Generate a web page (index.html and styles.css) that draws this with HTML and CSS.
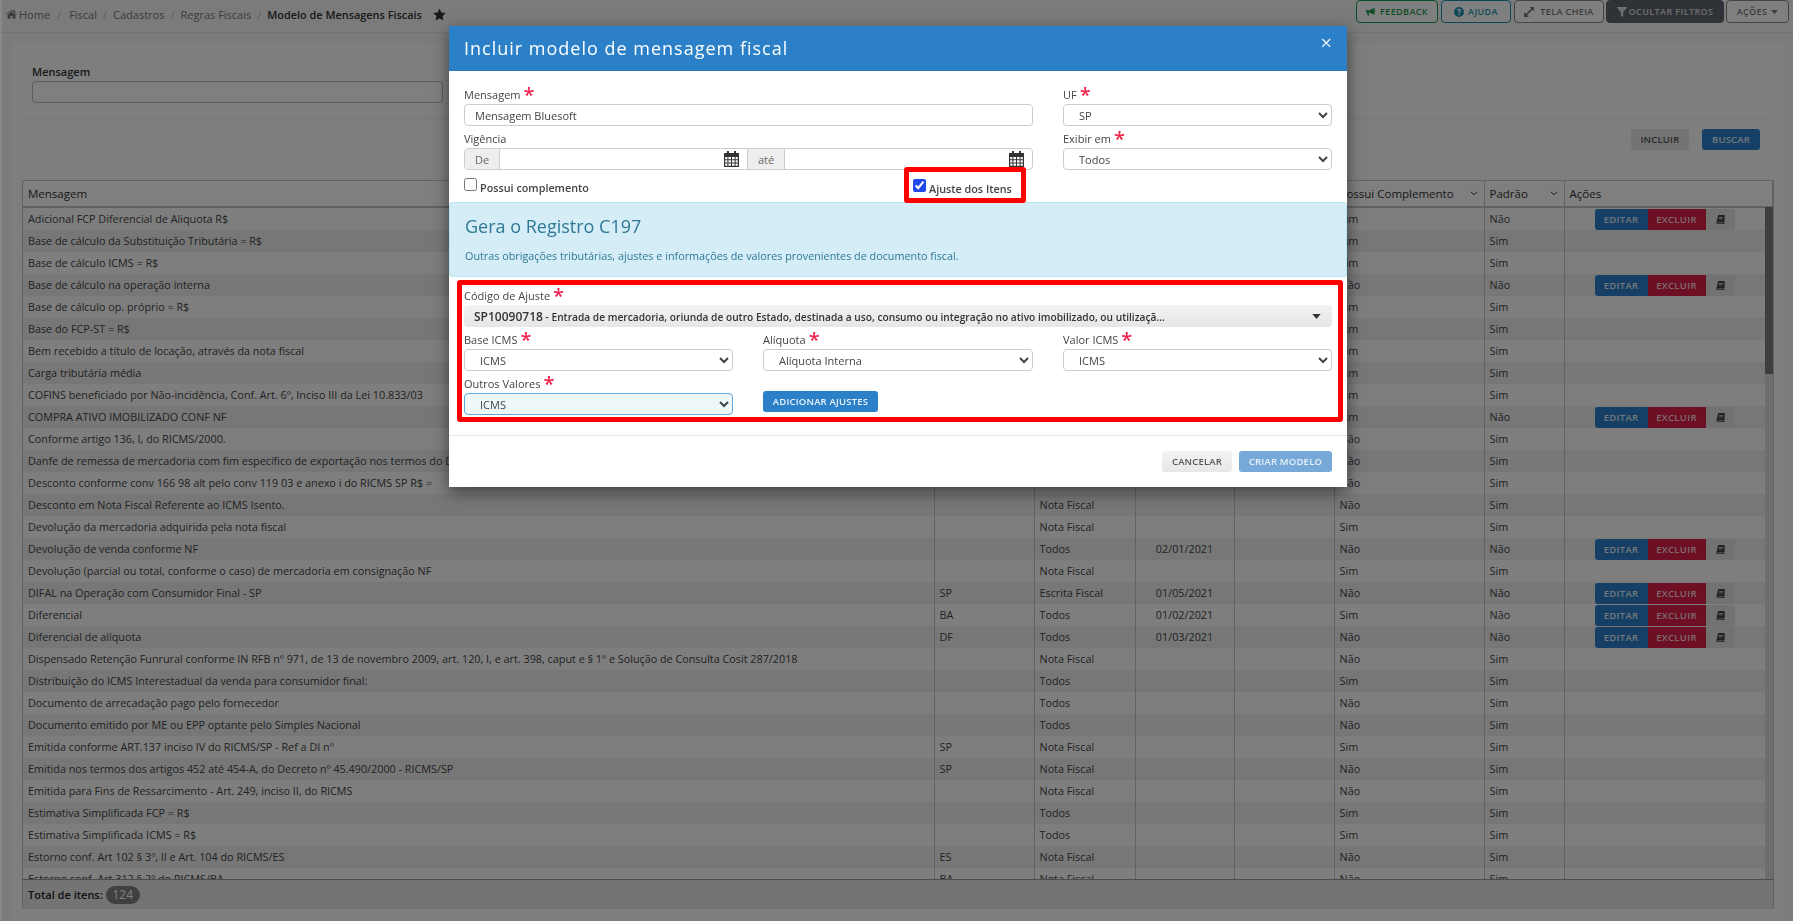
FILE: index.html
```html
<!DOCTYPE html>
<html lang="pt-BR">
<head>
  <meta charset="UTF-8">
  <meta name="viewport" content="width=device-width, initial-scale=1.0">
  <title>Modelo de Mensagens Fiscais</title>
  <link rel="stylesheet" href="styles.css">
</head>
<body>
  <svg class="icon_defs" width="0" height="0">
    <symbol id="i_home" viewBox="0 0 14 12"><path d="M7 0.6 0.2 6.3l.7.8L7 2l6.100 5.100.7-.8-2.300-1.900V1.300H9.800v1.500zM2 7.300V12h3.700V8.600h2.600V12H12V7.300L7 3.200z"/></symbol>
    <symbol id="i_star" viewBox="0 0 24 24"><path d="M12 .8l3.500 7.500 8.100 1-6 5.600 1.600 8.100-7.200-4-7.200 4 1.600-8.100-6-5.600 8.100-1z"/></symbol>
    <symbol id="i_horn" viewBox="0 0 14 12"><path d="M0 3.500h4.500L12 .2v9.600L4.500 6.800v0H3.700l.9 4.200H2.300L1.500 6.800H0zM12.800 3.400c.8.400.8 2.800 0 3.200z"/></symbol>
    <symbol id="i_help" viewBox="0 0 12 12"><path fill-rule="evenodd" d="M6 0a6 6 0 1 0 0 12A6 6 0 0 0 6 0zM5 8.400h1.800V10H5zM3.400 4.300C3.500 2.900 4.600 2.100 6 2.100c1.500 0 2.700.9 2.700 2.200 0 1.700-1.900 1.800-1.900 3.200H5.100c0-2 1.800-2.200 1.800-3.100 0-.4-.4-.7-.9-.7-.6 0-.9.300-1 .9z"/></symbol>
    <symbol id="i_expand" viewBox="0 0 12 12"><path d="M7 0h5v5l-1.800-1.800-6.400 6.400L5.500 11.300V12H0V6.500h.7l1.700 1.700 6.400-6.400z"/></symbol>
    <symbol id="i_filter" viewBox="0 0 12 12"><path d="M0 0h12v1L7.500 6v6L4.500 10V6L0 1z"/></symbol>
    <symbol id="i_caret" viewBox="0 0 10 6"><path d="M0 0h10L5 6z"/></symbol>
    <symbol id="i_chev" viewBox="0 0 10 6"><path d="M1 1l4 3.500L9 1" fill="none" stroke="currentColor" stroke-width="1.200"/></symbol>
    <symbol id="i_book" viewBox="0 0 12 12"><path d="M3 0h8.500v8.500L10.600 9.500v1L11.500 11v1H2.500C1 12 .5 11 .5 10zM2.500 10c-.7 0-.7 1 0 1h7.200v-1zM4 2.500v1h5v-1zM3.600 4.500v1h5v-1z"/></symbol>
    <symbol id="i_cal" viewBox="0 0 15 16"><path d="M3 0h2v2h5V0h2v2h3v14H0V2h3zM1.200 6v2.200h2.200V6zm3.200 0v2.200h2.600V6zm3.600 0v2.200h2.600V6zm3.600 0v2.200h2.200V6zM1.200 9.200v2.200h2.200V9.200zm3.200 0v2.200h2.600V9.200zm3.600 0v2.200h2.600V9.200zm3.600 0v2.200h2.200V9.200zM1.200 12.400v2.400h2.200v-2.400zm3.200 0v2.400h2.600v-2.400zm3.600 0v2.400h2.600v-2.400zm3.600 0v2.400h2.200v-2.400z"/></symbol>
  </svg>

  <header class="topbar">
    <nav class="crumbs">
      <svg class="ic_home"><use href="#i_home"/></svg>
      <a class="crumb crumb_home">Home</a><i>/</i>
      <a class="crumb">Fiscal</a><i>/</i>
      <a class="crumb">Cadastros</a><i>/</i>
      <a class="crumb">Regras Fiscais</a><i>/</i>
      <strong class="crumb_now">Modelo de Mensagens Fiscais</strong>
      <svg class="ic_star"><use href="#i_star"/></svg>
    </nav>
    <div class="top_actions">
      <a class="tbtn tbtn_feedback"><svg><use href="#i_horn"/></svg>Feedback</a>
      <a class="tbtn tbtn_help"><svg><use href="#i_help"/></svg>Ajuda</a>
      <a class="tbtn tbtn_full"><svg><use href="#i_expand"/></svg>Tela cheia</a>
      <a class="tbtn tbtn_filter"><svg><use href="#i_filter"/></svg>Ocultar filtros</a>
      <a class="tbtn tbtn_more">Ações<svg class="ic_caret"><use href="#i_caret"/></svg></a>
    </div>
  </header>

  <main class="card">
    <div class="filters">
      <label class="flabel">Mensagem</label>
      <input class="finput" type="text">
    </div>
    <hr class="rule">
    <div class="filter_btns">
      <a class="btn btn_grey">Incluir</a>
      <a class="btn btn_blue">Buscar</a>
    </div>

    <div class="grid_wrap">
      <table class="grid">
        <colgroup>
          <col class="c_msg"><col class="c_uf"><col class="c_exib"><col class="c_ini"><col class="c_fim"><col class="c_comp"><col class="c_pad"><col>
        </colgroup>
        <thead>
          <tr>
            <th>Mensagem</th>
            <th>UF</th>
            <th>Exibir em</th>
            <th>Início</th>
            <th>Fim</th>
            <th>Possui Complemento<svg class="ic_chev"><use href="#i_chev"/></svg></th>
            <th>Padrão<svg class="ic_chev"><use href="#i_chev"/></svg></th>
            <th>Ações</th>
          </tr>
        </thead>
        <tbody>
          <tr><td>Adicional FCP Diferencial de Aliquota R$</td><td></td><td></td><td></td><td></td><td>Sim</td><td>Não</td><td><div class="row_btns"><a class="rb rb_edit">Editar</a><a class="rb rb_del">Excluir</a><a class="rb rb_book"><svg><use href="#i_book"/></svg></a></div></td></tr>
          <tr><td>Base de cálculo da Substituição Tributária = R$</td><td></td><td></td><td></td><td></td><td>Sim</td><td>Sim</td><td></td></tr>
          <tr><td>Base de cálculo ICMS = R$</td><td></td><td></td><td></td><td></td><td>Sim</td><td>Sim</td><td></td></tr>
          <tr><td>Base de cálculo na operação interna</td><td></td><td></td><td></td><td></td><td>Não</td><td>Não</td><td><div class="row_btns"><a class="rb rb_edit">Editar</a><a class="rb rb_del">Excluir</a><a class="rb rb_book"><svg><use href="#i_book"/></svg></a></div></td></tr>
          <tr><td>Base de cálculo op. próprio = R$</td><td></td><td></td><td></td><td></td><td>Sim</td><td>Sim</td><td></td></tr>
          <tr><td>Base do FCP-ST = R$</td><td></td><td></td><td></td><td></td><td>Sim</td><td>Sim</td><td></td></tr>
          <tr><td>Bem recebido a título de locação, através da nota fiscal</td><td></td><td></td><td></td><td></td><td>Sim</td><td>Sim</td><td></td></tr>
          <tr><td>Carga tributária média</td><td></td><td></td><td></td><td></td><td>Sim</td><td>Sim</td><td></td></tr>
          <tr><td>COFINS beneficiado por Não-incidência, Conf. Art. 6º, Inciso III da Lei 10.833/03</td><td></td><td></td><td></td><td></td><td>Sim</td><td>Sim</td><td></td></tr>
          <tr><td>COMPRA ATIVO IMOBILIZADO CONF NF</td><td></td><td></td><td></td><td></td><td>Sim</td><td>Não</td><td><div class="row_btns"><a class="rb rb_edit">Editar</a><a class="rb rb_del">Excluir</a><a class="rb rb_book"><svg><use href="#i_book"/></svg></a></div></td></tr>
          <tr><td>Conforme artigo 136, I, do RICMS/2000.</td><td></td><td></td><td></td><td></td><td>Não</td><td>Sim</td><td></td></tr>
          <tr><td>Danfe de remessa de mercadoria com fim específico de exportação nos termos do Decreto</td><td></td><td></td><td></td><td></td><td>Não</td><td>Sim</td><td></td></tr>
          <tr><td>Desconto conforme conv 166 98 alt pelo conv 119 03 e anexo i do RICMS SP R$ =</td><td></td><td></td><td></td><td></td><td>Não</td><td>Sim</td><td></td></tr>
          <tr><td>Desconto em Nota Fiscal Referente ao ICMS Isento.</td><td></td><td>Nota Fiscal</td><td></td><td></td><td>Não</td><td>Sim</td><td></td></tr>
          <tr><td>Devolução da mercadoria adquirida pela nota fiscal</td><td></td><td>Nota Fiscal</td><td></td><td></td><td>Sim</td><td>Sim</td><td></td></tr>
          <tr><td>Devolução de venda conforme NF</td><td></td><td>Todos</td><td class="cdate">02/01/2021</td><td></td><td>Não</td><td>Não</td><td><div class="row_btns"><a class="rb rb_edit">Editar</a><a class="rb rb_del">Excluir</a><a class="rb rb_book"><svg><use href="#i_book"/></svg></a></div></td></tr>
          <tr><td>Devolução (parcial ou total, conforme o caso) de mercadoria em consignação NF</td><td></td><td>Nota Fiscal</td><td></td><td></td><td>Sim</td><td>Sim</td><td></td></tr>
          <tr><td>DIFAL na Operação com Consumidor Final - SP</td><td>SP</td><td>Escrita Fiscal</td><td class="cdate">01/05/2021</td><td></td><td>Não</td><td>Não</td><td><div class="row_btns"><a class="rb rb_edit">Editar</a><a class="rb rb_del">Excluir</a><a class="rb rb_book"><svg><use href="#i_book"/></svg></a></div></td></tr>
          <tr><td>Diferencial</td><td>BA</td><td>Todos</td><td class="cdate">01/02/2021</td><td></td><td>Sim</td><td>Não</td><td><div class="row_btns"><a class="rb rb_edit">Editar</a><a class="rb rb_del">Excluir</a><a class="rb rb_book"><svg><use href="#i_book"/></svg></a></div></td></tr>
          <tr><td>Diferencial de alíquota</td><td>DF</td><td>Todos</td><td class="cdate">01/03/2021</td><td></td><td>Não</td><td>Não</td><td><div class="row_btns"><a class="rb rb_edit">Editar</a><a class="rb rb_del">Excluir</a><a class="rb rb_book"><svg><use href="#i_book"/></svg></a></div></td></tr>
          <tr><td>Dispensado Retenção Funrural conforme IN RFB nº 971, de 13 de novembro 2009, art. 120, I, e art. 398, caput e § 1º e Solução de Consulta Cosit 287/2018</td><td></td><td>Nota Fiscal</td><td></td><td></td><td>Não</td><td>Sim</td><td></td></tr>
          <tr><td>Distribuição do ICMS Interestadual da venda para consumidor final:</td><td></td><td>Todos</td><td></td><td></td><td>Sim</td><td>Sim</td><td></td></tr>
          <tr><td>Documento de arrecadação pago pelo fornecedor</td><td></td><td>Todos</td><td></td><td></td><td>Não</td><td>Sim</td><td></td></tr>
          <tr><td>Documento emitido por ME ou EPP optante pelo Simples Nacional</td><td></td><td>Todos</td><td></td><td></td><td>Não</td><td>Sim</td><td></td></tr>
          <tr><td>Emitida conforme ART.137 inciso IV do RICMS/SP - Ref a DI nº</td><td>SP</td><td>Nota Fiscal</td><td></td><td></td><td>Sim</td><td>Sim</td><td></td></tr>
          <tr><td>Emitida nos termos dos artigos 452 até 454-A, do Decreto nº 45.490/2000 - RICMS/SP</td><td>SP</td><td>Nota Fiscal</td><td></td><td></td><td>Não</td><td>Sim</td><td></td></tr>
          <tr><td>Emitida para Fins de Ressarcimento - Art. 249, inciso II, do RICMS</td><td></td><td>Nota Fiscal</td><td></td><td></td><td>Não</td><td>Sim</td><td></td></tr>
          <tr><td>Estimativa Simplificada FCP = R$</td><td></td><td>Todos</td><td></td><td></td><td>Sim</td><td>Sim</td><td></td></tr>
          <tr><td>Estimativa Simplificada ICMS = R$</td><td></td><td>Todos</td><td></td><td></td><td>Sim</td><td>Sim</td><td></td></tr>
          <tr><td>Estorno conf. Art 102 § 3º, II e Art. 104 do RICMS/ES</td><td>ES</td><td>Nota Fiscal</td><td></td><td></td><td>Não</td><td>Sim</td><td></td></tr>
          <tr><td>Estorno conf. Art 312 § 2º do RICMS/BA</td><td>BA</td><td>Nota Fiscal</td><td></td><td></td><td>Não</td><td>Sim</td><td></td></tr>
        </tbody>
      </table>
      <div class="sbar"><div class="sthumb"></div></div>
    </div>
    <div class="grid_foot">
      <strong>Total de itens:</strong>
      <span class="count">124</span>
    </div>
  </main>

  <div class="backdrop"></div>

  <section class="modal">
    <div class="modal_head">
      <h2>Incluir modelo de mensagem fiscal</h2>
      <span class="modal_close">&times;</span>
    </div>

    <div class="modal_form">
      <div class="field span2">
        <label>Mensagem <b class="req">*</b></label>
        <input class="ctl" type="text" value="Mensagem Bluesoft">
      </div>
      <div class="field">
        <label>UF <b class="req">*</b></label>
        <select class="ctl"><option>SP</option></select>
      </div>
      <div class="field span2">
        <label>Vigência</label>
        <div class="range">
          <span class="addon addon_de">De</span>
          <div class="date_box"><svg><use href="#i_cal"/></svg></div>
          <span class="addon addon_ate">até</span>
          <div class="date_box"><svg><use href="#i_cal"/></svg></div>
        </div>
      </div>
      <div class="field">
        <label>Exibir em <b class="req">*</b></label>
        <select class="ctl"><option>Todos</option></select>
      </div>
    </div>

    <div class="checks">
      <label class="check"><input type="checkbox">Possui complemento</label>
      <div class="mark mark_check">
        <label class="check"><input type="checkbox" checked>Ajuste dos Itens</label>
      </div>
    </div>

    <div class="info">
      <h3>Gera o Registro C197</h3>
      <p>Outras obrigações tributárias, ajustes e informações de valores provenientes de documento fiscal.</p>
    </div>

    <div class="mark mark_block">
      <div class="field field_code">
        <label>Código de Ajuste <b class="req">*</b></label>
        <div class="combo"><span><b>SP10090718</b> - Entrada de mercadoria, oriunda de outro Estado, destinada a uso, consumo ou integração no ativo imobilizado, ou utilizaçã...</span><svg><use href="#i_caret"/></svg></div>
      </div>
      <div class="adjust_grid">
        <div class="field">
          <label>Base ICMS <b class="req">*</b></label>
          <select class="ctl"><option>ICMS</option></select>
        </div>
        <div class="field">
          <label>Alíquota <b class="req">*</b></label>
          <select class="ctl"><option>Alíquota Interna</option></select>
        </div>
        <div class="field">
          <label>Valor ICMS <b class="req">*</b></label>
          <select class="ctl"><option>ICMS</option></select>
        </div>
        <div class="field">
          <label>Outros Valores <b class="req">*</b></label>
          <select class="ctl ctl_focus"><option>ICMS</option></select>
        </div>
        <div class="field add_cell">
          <a class="btn btn_add">Adicionar ajustes</a>
        </div>
      </div>
    </div>

    <div class="modal_foot">
      <a class="btn btn_cancel">Cancelar</a>
      <a class="btn btn_create">Criar modelo</a>
    </div>
  </section>
</body>
</html>
```

FILE: styles.css
```css
* {
  box-sizing: border-box;
}
html, body {
  height: 100%;
}
body {
  margin: 0;
  background-color: #f6f6f6;
  color: #444;
  font-family: "Open Sans", "Liberation Sans", sans-serif;
  font-size: 11px;
  overflow: hidden;
}
.icon_defs {
  position: absolute;
}
svg {
  fill: currentColor;
}

/* top bar */
.topbar {
  display: flex;
  justify-content: space-between;
  height: 33px;
  padding: 0 4px 0 6px;
  border-bottom: 1px solid #e6e6e6;
}
.crumbs {
  display: flex;
  align-items: center;
  height: 28px;
  color: #777;
}
.crumbs i {
  font-style: normal;
  margin: 0 6px;
  color: #bbb;
}
.crumb_home + i {
  margin: 0 8px 0 7px;
}
.ic_home {
  width: 11px;
  height: 10px;
  margin-right: 2px;
}
.crumb_now {
  font-size: 10.900px;
  font-weight: 600;
  color: #333;
}
.ic_star {
  width: 13px;
  height: 13px;
  margin-left: 11px;
  color: #333;
}
.top_actions {
  display: flex;
  gap: 3px;
}
.tbtn {
  display: flex;
  align-items: center;
  justify-content: center;
  gap: 4px;
  height: 23px;
  background: #fff;
  border: 1px solid #888;
  border-radius: 4px;
  font-size: 9px;
  font-weight: 600;
  letter-spacing: .4px;
  text-transform: uppercase;
  color: #777;
}
.tbtn svg {
  width: 10px;
  height: 10px;
}
.tbtn_feedback {
  width: 82px;
  border-color: #1a9a50;
  color: #1a9a50;
}
.tbtn_help {
  width: 70px;
  border-color: #1a8fb0;
  color: #1a8fb0;
}
.tbtn_full {
  width: 90px;
  gap: 6px;
}
.tbtn_filter {
  width: 118px;
  margin-left: -1px;
  background: #5f666e;
  border-color: #5f666e;
  color: #ddd;
  gap: 2px;
}
.tbtn_more {
  width: 63px;
  margin-left: -1px;
}
.tbtn .ic_caret {
  width: 7px;
  height: 4px;
}

/* page card */
.card {
  margin: 10px 8px 0 11px;
  padding: 0 11px;
  height: 878px;
  background: #fcfcfc;
}
.filters {
  padding: 20px 10px 0;
  height: 60px;
}
.flabel {
  display: block;
  height: 18px;
  line-height: 18px;
  font-weight: 600;
  color: #333;
}
.finput {
  display: block;
  width: 411px;
  height: 22px;
  background: #fff;
  border: 1px solid #bbb;
  border-radius: 4px;
}
.rule {
  margin: 15px 0 0;
  border: 0;
  border-top: 1px solid #eee;
}
.filter_btns {
  display: flex;
  justify-content: flex-end;
  gap: 13px;
  padding: 10px 14px 0 0;
  height: 61px;
}
.btn {
  display: flex;
  align-items: center;
  justify-content: center;
  height: 21px;
  border-radius: 3px;
  font-size: 9.500px;
  font-weight: 600;
  letter-spacing: .2px;
  text-transform: uppercase;
}
.btn_grey {
  width: 58px;
  background: #e6e6e6;
  color: #555;
}
.btn_blue {
  width: 58px;
  background: #2b7fc9;
  color: #e3eef8;
}

/* grid */
.grid_wrap {
  position: relative;
  height: 699px;
  overflow: hidden;
  border-left: 1px solid #c4c4c4;
  border-right: 1px solid #c4c4c4;
  border-top: 1px solid #c4c4c4;
}
.grid {
  width: 100%;
  border-collapse: collapse;
  table-layout: fixed;
}
.c_msg { width: 911px; }
.c_uf { width: 100px; }
.c_exib { width: 101px; }
.c_ini { width: 99px; }
.c_fim { width: 100px; }
.c_comp { width: 150px; }
.c_pad { width: 80px; }
.grid th {
  position: relative;
  height: 26px;
  padding: 0 5px;
  border-right: 1px solid #c4c4c4;
  border-bottom: 2px solid #c4c4c4;
  background: #fff;
  text-align: left;
  font-size: 11.500px;
  font-weight: 400;
  color: #333;
}
.ic_chev {
  position: absolute;
  right: 6px;
  top: 10px;
  width: 8px;
  height: 5px;
}
.grid td {
  height: 22px;
  padding: 0 5px 2px;
  border-right: 1px solid #c4c4c4;
  font-size: 10.800px;
  white-space: nowrap;
  overflow: visible;
  color: #444;
}
.grid tbody tr:nth-child(even) td {
  background: #eee;
}
.grid td.cdate {
  text-align: center;
}
.row_btns {
  display: flex;
  height: 21px;
  margin: 1px 0 -2px 25px;
}
.rb {
  display: flex;
  align-items: center;
  justify-content: center;
  font-size: 9.500px;
  font-weight: 600;
  letter-spacing: .3px;
  text-transform: uppercase;
}
.rb_edit {
  width: 53px;
  background: #2b7fc9;
  color: #e3eef8;
  border-radius: 3px 0 0 3px;
}
.rb_del {
  width: 58px;
  background: #dc1f48;
  color: #f6d5dc;
}
.rb_book {
  width: 29px;
  background: #e4e4e4;
  border-radius: 0 3px 3px 0;
  color: #444;
}
.rb_book svg {
  width: 9px;
  height: 9px;
}
.sbar {
  position: absolute;
  top: 26px;
  right: 0;
  bottom: 0;
  width: 8px;
  background: #dcdcdc;
}
.sthumb {
  height: 167px;
  background: #7c7c7c;
}
.grid_foot {
  display: flex;
  align-items: center;
  gap: 3px;
  height: 30px;
  padding-left: 5px;
  background: #e9e9e9;
  border-top: 1px solid #999;
  border-left: 1px solid #c4c4c4;
  border-right: 1px solid #c4c4c4;
}
.grid_foot strong {
  font-weight: 600;
  color: #222;
}
.count {
  width: 34px;
  height: 18px;
  line-height: 18px;
  border-radius: 9px;
  background: #808080;
  color: #fff;
  text-align: center;
  font-size: 12px;
}

/* modal */
.backdrop {
  position: fixed;
  top: 0;
  left: 0;
  right: 0;
  bottom: 0;
  background: rgba(0, 0, 0, .5);
  border-left: 2px solid rgba(255, 255, 255, .1);
}
.modal {
  position: absolute;
  top: 26px;
  left: 449px;
  width: 898px;
  height: 461px;
  background: #fff;
  box-shadow: 0 5px 15px rgba(0, 0, 0, .5);
  color: #444;
}
.modal_head {
  display: flex;
  justify-content: space-between;
  height: 45px;
  padding: 0 15px;
  background: #2b80c8;
  color: #fff;
}
.modal_head h2 {
  margin: 0;
  font-size: 18px;
  font-weight: 400;
  letter-spacing: 1px;
  line-height: 44px;
}
.modal_close {
  font-size: 20px;
  line-height: 33px;
  color: #e5eff8;
}
.modal_form {
  display: grid;
  grid-template-columns: 269px 270px 269px;
  column-gap: 30px;
  padding: 11px 15px 0;
}
.span2 {
  grid-column: span 2;
}
.field label {
  display: flex;
  gap: 3px;
  height: 22px;
  padding-top: 5px;
  line-height: 16px;
  color: #444;
}
.req {
  font-size: 20px;
  font-weight: 600;
  line-height: 16px;
  color: #f0224e;
}
.ctl {
  display: block;
  width: 100%;
  height: 22px;
  padding: 0 10px;
  background-color: #fff;
  border: 1px solid #ccc;
  border-radius: 4px;
  font-family: inherit;
  font-size: 11px;
  color: #444;
}
select.ctl {
  padding-left: 11px;
}
.ctl_focus {
  background-color: #eef8fb;
  border-color: #5da9e0;
}
.range {
  display: flex;
  height: 22px;
  border: 1px solid #ccc;
  border-radius: 4px;
}
.addon {
  display: flex;
  align-items: center;
  justify-content: center;
  background: #eee;
  color: #666;
}
.addon_de {
  width: 35px;
  border-right: 1px solid #ccc;
  border-radius: 3px 0 0 3px;
}
.addon_ate {
  width: 38px;
  border-left: 1px solid #ccc;
  border-right: 1px solid #ccc;
}
.date_box {
  flex: 1;
  display: flex;
  align-items: center;
  justify-content: flex-end;
  padding-right: 8px;
  color: #333;
}
.date_box svg {
  width: 15px;
  height: 16px;
}
.checks {
  display: flex;
  justify-content: space-between;
  height: 32px;
  padding: 0 321px 0 15px;
}
.check {
  display: flex;
  align-items: center;
  height: 32px;
  padding-top: 2px;
  gap: 3px;
  font-size: 10.800px;
  font-weight: 600;
  color: #444;
}
.check input {
  width: 13px;
  height: 13px;
  margin: -5px 0 0;
  accent-color: #2148ec;
}
.mark {
  border: 5px solid #f00;
  border-radius: 3px;
}
.mark_check {
  width: 122px;
  height: 36px;
  margin-top: -3px;
  padding: 0 0 0 4px;
}
.mark_check .check {
  height: 30px;
}
.info {
  height: 75px;
  padding: 12px 15px 0;
  background: #d5edf7;
  border: 1px solid #b9e6ee;
  border-radius: 3px;
  color: #2f7895;
}
.info h3 {
  margin: 0 0 11px;
  font-size: 18px;
  font-weight: 400;
  line-height: 22px;
}
.info p {
  margin: 0;
  font-size: 10.800px;
}
.mark_block {
  width: 886px;
  height: 142px;
  margin: 3px 0 0 8px;
  padding: 0 6px 2px 2px;
}
.field_code label {
  height: 20px;
  padding-top: 3px;
}
.combo {
  display: flex;
  align-items: center;
  justify-content: space-between;
  height: 22px;
  padding: 0 11px 0 10px;
  background: linear-gradient(#f2f2f2, #e6e6e6);
  border-radius: 4px;
  font-size: 10.200px;
  font-weight: 600;
  color: #333;
}
.combo b {
  font-size: 12px;
  font-weight: 600;
}
.combo svg {
  width: 9px;
  height: 5px;
}
.adjust_grid {
  display: grid;
  grid-template-columns: 269px 270px 269px;
  column-gap: 30px;
}
.add_cell {
  padding-top: 20px;
}
.btn_add {
  width: 115px;
  background: #2b80c8;
  color: #eaf3fb;
}
.modal_foot {
  display: flex;
  justify-content: flex-end;
  gap: 7px;
  margin-top: 13px;
  padding: 15px 15px 0;
  border-top: 1px solid #e5e5e5;
}
.btn_cancel {
  width: 70px;
  background: linear-gradient(#f4f4f4, #e6e6e6);
  color: #555;
}
.btn_create {
  width: 93px;
  background: #76a9d8;
  color: #e8f1f9;
}
```
